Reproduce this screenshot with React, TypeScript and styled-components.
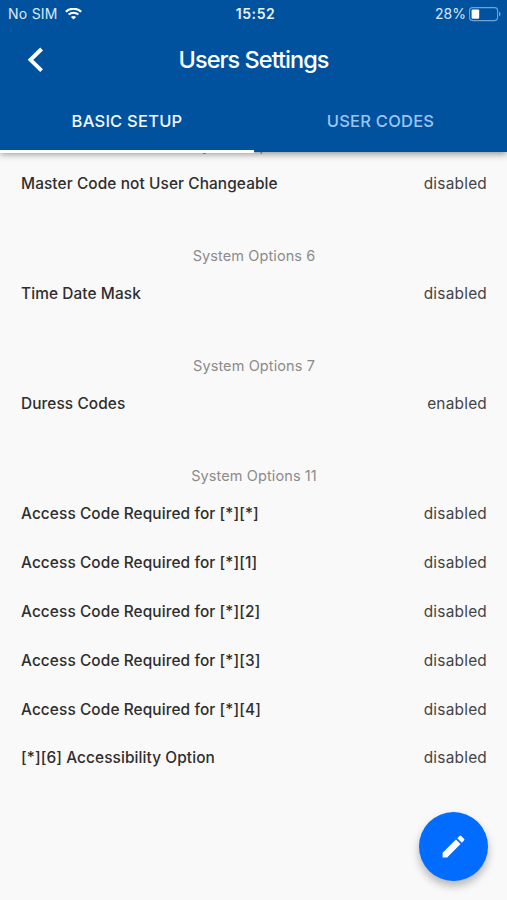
import React from "react";
import styled, { createGlobalStyle } from "styled-components";

const GlobalStyle = createGlobalStyle`
  * { box-sizing: border-box; }
  body {
    margin: 0;
    background: #f9f9f9;
    font-family: Inter, "Liberation Sans", sans-serif;
  }
`;

const Screen = styled.div`
  position: relative;
  height: 900px;
  overflow: hidden;
  background: #f9f9f9;
`;

const Header = styled.header`
  position: relative;
  z-index: 1;
  height: 152px;
  background: #00529f;
  color: #fff;
  box-shadow: 0 2px 7px rgba(0, 0, 0, 0.42);
`;

const StatusBar = styled.div`
  display: grid;
  grid-template-columns: 1fr auto 1fr;
  align-items: center;
  height: 28px;
  padding: 0 6px 0 8px;
  font-size: 14px;
  line-height: 28px;
`;

const Carrier = styled.div`
  display: flex;
  align-items: center;
  gap: 7px;
  color: #dce9f7;
  letter-spacing: 0.25px;
`;

const Clock = styled.div`
  padding-left: 2px;
  font-weight: 600;
  letter-spacing: 0.6px;
  color: #e9f3fd;
`;

const Power = styled.div`
  display: flex;
  align-items: center;
  justify-content: flex-end;
  gap: 3px;
  color: #dce9f7;
`;

const TitleBar = styled.div`
  display: grid;
  grid-template-columns: 72px 1fr 72px;
  align-items: center;
  height: 64px;
`;

const BackButton = styled.button`
  display: flex;
  align-items: center;
  height: 64px;
  padding: 0 0 0 27px;
  border: 0;
  background: none;
  color: #fff;
`;

const Title = styled.h1`
  margin: 0;
  font-size: 23.5px;
  font-weight: 500;
  line-height: 64px;
  letter-spacing: -0.97px;
  text-align: center;
  white-space: nowrap;
`;

const Tabs = styled.nav`
  display: grid;
  grid-template-columns: 254px 253px;
  height: 61px;
`;

const Tab = styled.button<{ $active?: boolean }>`
  padding: 0;
  border: 0;
  border-bottom: 3px solid ${(p) => (p.$active ? "#fff" : "transparent")};
  background: none;
  color: ${(p) => (p.$active ? "#f4f9ff" : "#9cc4ee")};
  font: 500 16.5px/58px Inter, "Liberation Sans", sans-serif;
  letter-spacing: 0.23px;
`;

const Content = styled.main`
  margin-top: -19px;
  padding: 0 20px 0 21px;
`;

const Section = styled.section`
  margin-bottom: 35px;
`;

const SectionTitle = styled.h2`
  margin: 0;
  height: 26px;
  color: #8b8b8b;
  font-size: 14.5px;
  font-weight: 400;
  line-height: 26px;
  letter-spacing: 0.1px;
  text-align: center;
`;

const Row = styled.div`
  display: flex;
  align-items: center;
  justify-content: space-between;
  height: 49px;
  font-size: 15.4px;

  &:nth-of-type(n + 4) {
    height: 48.8px;
  }
`;

const Label = styled.span`
  color: #2e2e2e;
  font-weight: 500;
  letter-spacing: 0.1px;
`;

const Value = styled.span`
  color: #444;
  letter-spacing: 0.23px;
`;

const EditButton = styled.button`
  position: absolute;
  right: 19px;
  bottom: 19px;
  display: grid;
  place-items: center;
  width: 69px;
  height: 69px;
  padding: 0;
  border: 0;
  border-radius: 50%;
  background: #016cff;
  color: #fff;
  box-shadow: 0 5px 8px rgba(0, 0, 0, 0.28);
`;

const WifiIcon = () => (
  <svg width="17" height="13" viewBox="0 0 17 13" fill="none" stroke="#fff" strokeWidth="2">
    <path d="M.8 3.7C5 -.3 12 -.3 16.2 3.7" />
    <path d="M3.6 6.6c2.8-2.6 7-2.6 9.8 0" />
    <path d="M8.5 11.4 5.9 8.9c1.5-1.3 3.7-1.3 5.2 0z" fill="#fff" stroke="none" />
  </svg>
);

const BatteryIcon = () => (
  <svg width="32" height="15" viewBox="0 0 32 15">
    <rect x=".6" y=".6" width="28" height="13" rx="3" fill="none" stroke="#6fa3d8" strokeWidth="1.1" />
    <rect x="2.6" y="2.5" width="7.6" height="9.2" rx="1" fill="#fff" />
    <path d="M30 4.6v5c2-.8 2-4.2 0-5z" fill="#6fa3d8" />
  </svg>
);

const BackIcon = () => (
  <svg width="17" height="26" viewBox="0 0 17 26" fill="none" stroke="#fff" strokeWidth="3.9">
    <path d="M14.6 2 3.5 12.8l11.1 10.8" />
  </svg>
);

const PencilIcon = () => (
  <svg width="29" height="29" viewBox="0 0 24 24" fill="currentColor">
    <path d="M3 17.25V21h3.75L17.81 9.94l-3.75-3.75L3 17.25zM20.71 7.04a1 1 0 0 0 0-1.41l-2.34-2.34a1 1 0 0 0-1.41 0l-1.83 1.83 3.75 3.75 1.83-1.83z" />
  </svg>
);

const sections = [
  { title: "System Options 5", rows: [["Master Code not User Changeable", "disabled"]] },
  { title: "System Options 6", rows: [["Time Date Mask", "disabled"]] },
  { title: "System Options 7", rows: [["Duress Codes", "enabled"]] },
  {
    title: "System Options 11",
    rows: [
      ["Access Code Required for [*][*]", "disabled"],
      ["Access Code Required for [*][1]", "disabled"],
      ["Access Code Required for [*][2]", "disabled"],
      ["Access Code Required for [*][3]", "disabled"],
      ["Access Code Required for [*][4]", "disabled"],
      ["[*][6] Accessibility Option", "disabled"],
    ],
  },
];

export default function App() {
  return (
    <Screen>
      <GlobalStyle />
      <Header>
        <StatusBar>
          <Carrier>
            No SIM
            <WifiIcon />
          </Carrier>
          <Clock>15:52</Clock>
          <Power>
            28%
            <BatteryIcon />
          </Power>
        </StatusBar>
        <TitleBar>
          <BackButton aria-label="Back">
            <BackIcon />
          </BackButton>
          <Title>Users Settings</Title>
        </TitleBar>
        <Tabs>
          <Tab $active>BASIC SETUP</Tab>
          <Tab>USER CODES</Tab>
        </Tabs>
      </Header>
      <Content>
        {sections.map((section) => (
          <Section key={section.title}>
            <SectionTitle>{section.title}</SectionTitle>
            {section.rows.map(([label, value]) => (
              <Row key={label}>
                <Label>{label}</Label>
                <Value>{value}</Value>
              </Row>
            ))}
          </Section>
        ))}
      </Content>
      <EditButton aria-label="Edit">
        <PencilIcon />
      </EditButton>
    </Screen>
  );
}
